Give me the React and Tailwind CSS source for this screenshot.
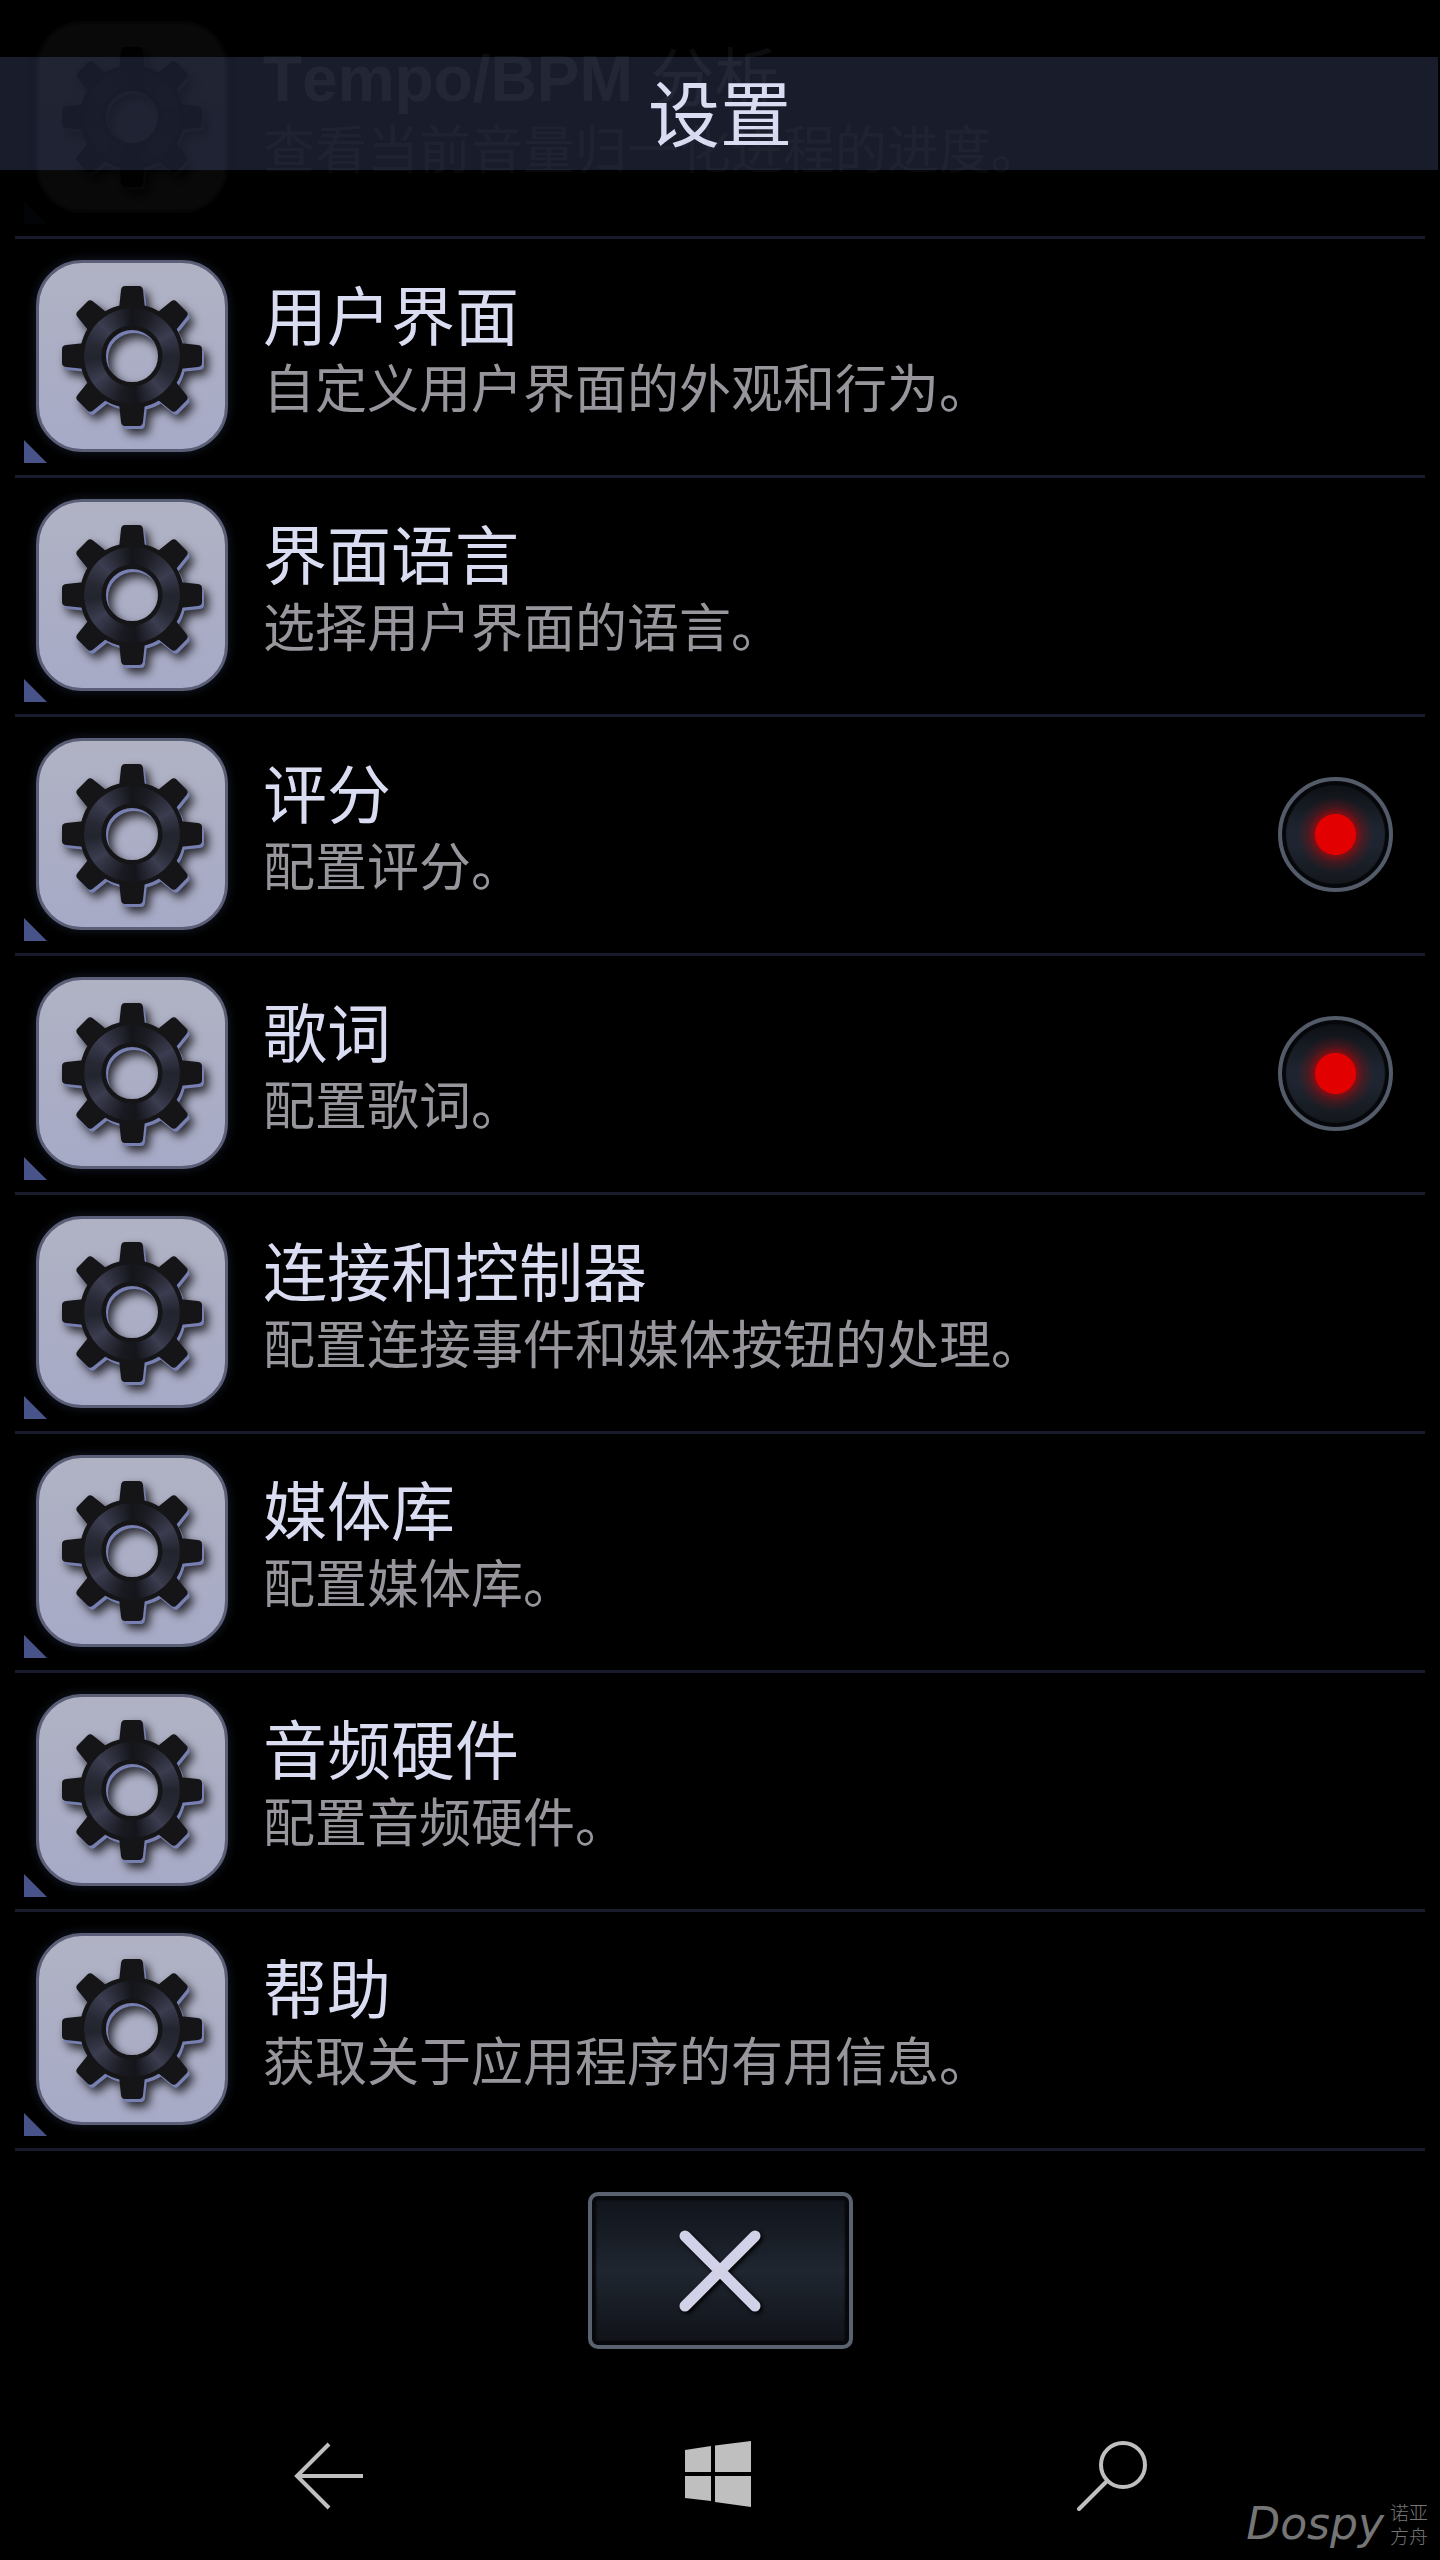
import { useState } from 'react';

const settings = [
  { id: 'ui', title: '用户界面', description: '自定义用户界面的外观和行为。' },
  { id: 'language', title: '界面语言', description: '选择用户界面的语言。' },
  { id: 'rating', title: '评分', description: '配置评分。', toggle: true },
  { id: 'lyrics', title: '歌词', description: '配置歌词。', toggle: true },
  { id: 'connection', title: '连接和控制器', description: '配置连接事件和媒体按钮的处理。' },
  { id: 'library', title: '媒体库', description: '配置媒体库。' },
  { id: 'hardware', title: '音频硬件', description: '配置音频硬件。' },
  { id: 'help', title: '帮助', description: '获取关于应用程序的有用信息。' },
];

const toothAngles = [0, 45, 90, 135, 180, 225, 270, 315];

function GearTile() {
  return (
    <span className="relative block h-48 w-48 shrink-0 rounded-[46px] border-3 border-[#5a5e76] bg-linear-to-b from-[#b0b2c4] to-[#a7aac6] shadow-[0_0_8px_2px_#10141f]">
      <svg
        viewBox="2 2 186 186"
        className="h-full w-full [filter:drop-shadow(2px_3px_0_#7880b2)_drop-shadow(4px_5px_5px_rgba(0,0,0,0.75))]"
        aria-hidden="true"
      >
        <circle cx="95" cy="95" r="39" fill="none" stroke="#151518" strokeWidth="26" />
        {toothAngles.map((angle) => (
          <path
            key={angle}
            d="M82 48 L84 29 Q84.500 25 88 25 H102 Q105.500 25 106 29 L108 48 Z"
            fill="#151518"
            transform={`rotate(${angle} 95 95)`}
          />
        ))}
      </svg>
      <span className="absolute inset-[45px] rounded-full bg-[conic-gradient(#14151a_0deg,#1d1e26_25deg,#3b3d50_60deg,#22242e_90deg,#262833_115deg,#3b3d50_140deg,#14151a_175deg,#1a1b22_195deg,#3b3d50_235deg,#22242e_265deg,#262833_285deg,#3b3d50_315deg,#14151a_360deg)] [mask:radial-gradient(circle,transparent_30px,#000_31px)]" />
    </span>
  );
}

function RowContent({ title, description, latin }) {
  return (
    <>
      <GearTile />
      <span className="block pb-1 whitespace-nowrap">
        <span className="block text-[64px] leading-[72px] text-[#dadcf2] [font-kerning:none]">
          {latin && <b>{latin} </b>}
          {title}
        </span>
        <span className="block text-[52px] leading-[72px] text-[#98969c]">{description}</span>
      </span>
      <span className="absolute bottom-3 left-[9px] h-[23px] w-[23px] bg-[#48538a] [clip-path:polygon(0_0,100%_100%,0_100%)]" />
    </>
  );
}

function SettingRow({ item }) {
  const [on, setOn] = useState(true);

  return (
    <li className="relative flex h-[239px] items-center border-b-3 border-[#191b2d] pr-8">
      <button type="button" className="flex h-full flex-1 items-center gap-[35px] pb-0.5 pl-[21px] text-left">
        <RowContent title={item.title} description={item.description} />
      </button>
      {item.toggle && (
        <input
          type="checkbox"
          aria-label={item.title}
          checked={on}
          onChange={(e) => setOn(e.target.checked)}
          className="mb-0.5 h-[115px] w-[115px] shrink-0 appearance-none rounded-full border-4 border-[#535b68] bg-linear-to-b from-[#0b0d10] via-[#1e2530] to-[#121418] bg-origin-border shadow-[inset_0_0_1px_4px_#06070a] checked:bg-[radial-gradient(circle,#e20000_20px,rgba(150,10,14,0.8)_21px,rgba(120,16,20,0.4)_28px,transparent_38px),linear-gradient(#0b0d10,#1e2530_45%,#1e2530_60%,#121418)]"
        />
      )}
    </li>
  );
}

function NavBar() {
  return (
    <nav className="mt-auto grid h-[170px] grid-cols-3 px-[132px] text-[#bfbfbf]">
      <button type="button" aria-label="Back" className="grid place-items-center">
        <svg viewBox="0 0 72 72" className="h-[72px] w-[72px]" fill="none" stroke="currentColor" strokeWidth="4">
          <path d="M71 37 H5 M37 5 L5 37 L37 69" />
        </svg>
      </button>
      <button type="button" aria-label="Start" className="grid place-items-center">
        <svg viewBox="0 0 72 72" className="h-[72px] w-[72px]" fill="currentColor">
          <path d="M1 11 L27 7 V33 H1 Z M31 6.500 L67 2 V33 H31 Z M1 37 H27 V62 L1 59 Z M31 37 H67 V68 L31 63 Z" />
        </svg>
      </button>
      <button type="button" aria-label="Search" className="grid place-items-center">
        <svg viewBox="0 0 72 72" className="h-[72px] w-[72px]" fill="none" stroke="currentColor" strokeWidth="4">
          <circle cx="47" cy="26" r="22" />
          <path d="M31 42 L3 70" strokeLinecap="round" />
        </svg>
      </button>
    </nav>
  );
}

export default function App() {
  return (
    <div className="relative flex min-h-screen flex-col overflow-hidden bg-black font-['Liberation_Sans','Noto_Sans_CJK_SC',sans-serif]">
      <header className="absolute inset-x-0 top-[57px] mr-0.5 grid h-[113px] place-items-center bg-[#191c2b]">
        <h1 className="pt-1 pl-0.5 text-[72px] leading-[80px] text-[#dadcf2]">设置</h1>
      </header>

      <main className="flex flex-col items-center px-[15px] pt-px">
        {/* row scrolled under the header, almost faded out */}
        <div className="relative h-[238px] w-full border-b-3 border-[#191b2d]">
          <div className="flex h-full items-center gap-[35px] pb-1 pl-[21px] opacity-5">
            <RowContent latin="Tempo/BPM" title="分析" description="查看当前音量归一化进程的进度。" />
          </div>
        </div>
        <ul className="w-full">
          {settings.map((item) => (
            <SettingRow key={item.id} item={item} />
          ))}
        </ul>
        <button
          type="button"
          aria-label="Close"
          className="mt-[41px] grid h-[157px] w-[265px] place-items-center rounded-[10px] border-4 border-[#59626e] bg-linear-to-b from-[#10131a] via-[#1f2630] to-[#101218] shadow-[inset_0_0_2px_4px_#07080b]"
        >
          <svg
            viewBox="0 0 84 84"
            className="h-[84px] w-[84px] [filter:drop-shadow(2px_2px_2px_#000)]"
            fill="none"
            stroke="#d1d2e8"
            strokeWidth="11"
            strokeLinecap="round"
          >
            <path d="M7 7 L77 77 M77 7 L7 77" />
          </svg>
        </button>
      </main>

      <NavBar />

      <div className="absolute right-3 bottom-2 flex items-center gap-1.5 text-[#757575]">
        <span className="pb-1 font-['DejaVu_Sans',sans-serif] text-[44px] leading-[48px] italic">Dospy</span>
        <span className="text-[19px] leading-[24px] font-light">
          诺亚
          <br />
          方舟
        </span>
      </div>
    </div>
  );
}
